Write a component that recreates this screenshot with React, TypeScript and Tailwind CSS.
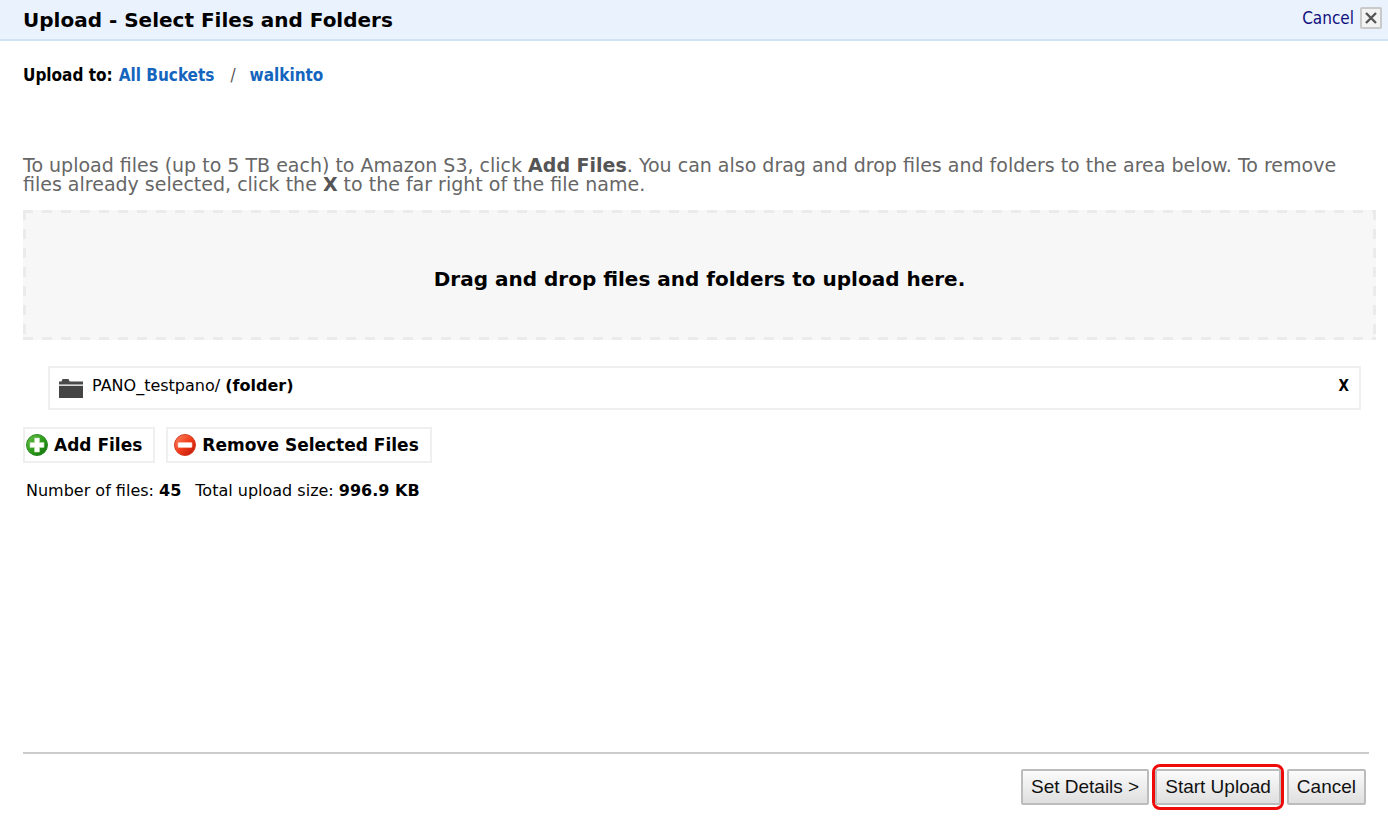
import type { ReactNode } from "react";

const files = [{ name: "PANO_testpano/", kind: "(folder)" }];

const buckets = [
  { label: "All Buckets", href: "#buckets" },
  { label: "walkinto", href: "#walkinto" },
];

function FolderIcon() {
  return (
    <svg width="24" height="19" viewBox="0 0 24 19" aria-hidden="true">
      <path d="M0 5.5V2.5h2.5L3.5 0h6l1.2 2.5H24v3z" fill="#4a4a4a" />
      <path d="M0 6.8h24V19H0z" fill="#444" />
    </svg>
  );
}

function AddIcon() {
  return (
    <svg width="22" height="22" viewBox="0 0 22 22" aria-hidden="true">
      <defs>
        <linearGradient id="add" x1="0" y1="0" x2="1" y2="1">
          <stop offset="0" stopColor="#6cc24a" />
          <stop offset="0.5" stopColor="#2f9e1d" />
          <stop offset="1" stopColor="#0d6b08" />
        </linearGradient>
      </defs>
      <circle cx="11" cy="11" r="10.5" fill="url(#add)" stroke="#2a8a22" />
      <path
        d="M8.5 4h5v4.5H18v5h-4.5V18h-5v-4.5H4v-5h4.5z"
        fill="#fff"
        stroke="#b8e0a8"
        strokeWidth="0.6"
      />
    </svg>
  );
}

function RemoveIcon() {
  return (
    <svg width="22" height="22" viewBox="0 0 22 22" aria-hidden="true">
      <defs>
        <linearGradient id="remove" x1="0" y1="0" x2="1" y2="1">
          <stop offset="0" stopColor="#ff8a63" />
          <stop offset="0.5" stopColor="#f23d1c" />
          <stop offset="1" stopColor="#b81208" />
        </linearGradient>
      </defs>
      <circle cx="11" cy="11" r="10.5" fill="url(#remove)" stroke="#d63a22" />
      <rect x="4" y="8.5" width="14" height="5" rx="0.8" fill="#fff" stroke="#ffc0b0" strokeWidth="0.6" />
    </svg>
  );
}

function FileButton({ icon, children }: { icon: ReactNode; children: ReactNode }) {
  return (
    <button
      type="button"
      className="flex h-9 items-center gap-[6px] border-2 border-[#efefef] bg-white pr-[11px] pl-px text-[17px] leading-5 font-bold last:pl-[6px]"
    >
      {icon}
      {children}
    </button>
  );
}

function FooterButton({ children }: { children: ReactNode }) {
  return (
    <button
      type="button"
      className="h-9 rounded-xs border-2 border-[#bcbcbc] bg-linear-to-b from-[#fbfbfb] to-[#dfdfdf] px-2 font-['Liberation_Sans',Arial,sans-serif] text-[19px] leading-6 text-[#111]"
    >
      {children}
    </button>
  );
}

export default function App() {
  return (
    <div className="flex min-h-screen flex-col bg-white font-['DejaVu_Sans',Verdana,sans-serif] text-black">
      <header className="flex h-[41px] items-center justify-between border-b-2 border-[#cfe3f3] bg-[#eaf2fe] pr-[6px] pl-[23px]">
        <h1 className="text-[20px] leading-6 font-bold">Upload - Select Files and Folders</h1>
        <button
          type="button"
          className="flex items-center gap-[6px] pb-1 font-['DejaVu_Sans_Condensed','DejaVu_Sans',sans-serif] text-[17px] leading-5 text-[#10107c]"
        >
          Cancel
          <span className="flex size-[22px] items-center justify-center rounded-xs border-2 border-[#c9c9c9] bg-[#f3f3f3]">
            <svg width="12" height="12" viewBox="0 0 12 12" aria-hidden="true">
              <path d="M1 1l10 10M11 1l-10 10" stroke="#555" strokeWidth="2.4" />
            </svg>
          </span>
        </button>
      </header>

      <main className="flex-1 pr-3 pl-[23px]">
        <nav className="mt-6 flex font-['DejaVu_Sans_Condensed','DejaVu_Sans',sans-serif] text-[17px] leading-5 font-bold">
          <span className="mr-[6px]">Upload to:</span>
          {buckets.map((bucket, index) => (
            <span key={bucket.label}>
              {index > 0 && <span className="mr-[14px] ml-4 font-normal text-[#555]">/</span>}
              <a href={bucket.href} className="text-[#1465bd]">
                {bucket.label}
              </a>
            </span>
          ))}
        </nav>

        <p className="mt-[71px] text-[19px] leading-[19px] text-[#666]">
          To upload files (up to 5 TB each) to Amazon S3, click <b className="text-[#555]">Add Files</b>. You can
          also drag and drop files and folders to the area below. To remove files already selected, click the{" "}
          <b className="text-[#555]">X</b> to the far right of the file name.
        </p>

        {/* one dashed strip per side */}
        <section className="mt-4 flex h-[130px] items-center justify-center bg-[#f7f7f7] bg-[repeating-linear-gradient(90deg,#ebebeb_0_10px,transparent_10px_19px),repeating-linear-gradient(90deg,#ebebeb_0_10px,transparent_10px_19px),repeating-linear-gradient(#ebebeb_0_10px,transparent_10px_19px),repeating-linear-gradient(#ebebeb_0_10px,transparent_10px_19px)] bg-[length:100%_3px,100%_3px,3px_100%,3px_100%] bg-[position:top,bottom,left,right] bg-no-repeat pt-2">
          <h2 className="text-[20px] leading-6 font-bold">Drag and drop files and folders to upload here.</h2>
        </section>

        <ul className="mt-[26px] mr-[15px] ml-[25px] text-[16px] leading-5">
          {files.map((file) => (
            <li key={file.name} className="flex h-11 items-center border-2 border-[#efefef] pr-[10px] pb-1 pl-[9px]">
              <span className="mt-1">
                <FolderIcon />
              </span>
              <span className="ml-[9px] flex-1">
                {file.name} <b>{file.kind}</b>
              </span>
              <button
                type="button"
                className="font-['DejaVu_Sans_Condensed','DejaVu_Sans',sans-serif] text-[15px] font-bold"
              >
                X
              </button>
            </li>
          ))}
        </ul>

        <div className="mt-[17px] flex gap-[11px]">
          <FileButton icon={<AddIcon />}>Add Files</FileButton>
          <FileButton icon={<RemoveIcon />}>Remove Selected Files</FileButton>
        </div>

        <p className="mt-[18px] ml-[3px] flex gap-[14px] text-[16px] leading-5">
          <span>
            Number of files: <b>45</b>
          </span>
          <span>
            Total upload size: <b>996.9 KB</b>
          </span>
        </p>
      </main>

      <footer className="mr-[19px] ml-[23px] flex items-center justify-end gap-[3px] border-t-2 border-[#cccccc] pt-[10px] pr-[3px] pb-4">
        <FooterButton>Set Details &gt;</FooterButton>
        <span className="flex rounded-lg border-3 border-[#f00b0b] py-0.5">
          <FooterButton>Start Upload</FooterButton>
        </span>
        <FooterButton>Cancel</FooterButton>
      </footer>
    </div>
  );
}
